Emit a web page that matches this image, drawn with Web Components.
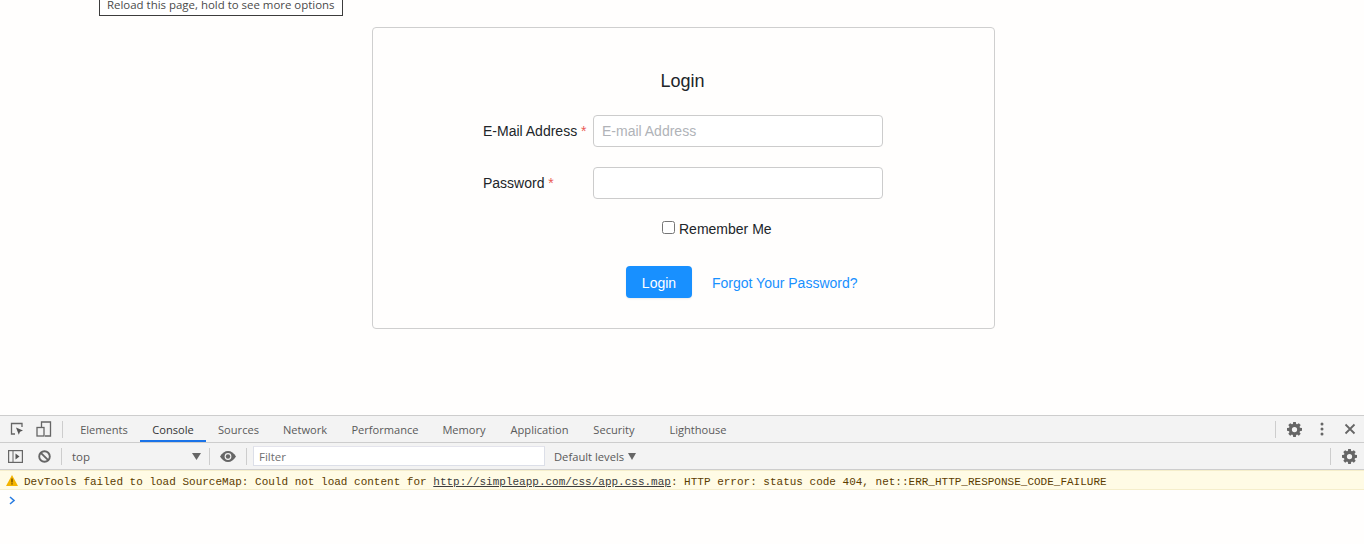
<!DOCTYPE html>
<html>
<head>
<meta charset="utf-8">
<title>Login</title>
<style>
	html, body { margin: 0; padding: 0; height: 544px; overflow: hidden; background: #fffefd; }
	body { display: flex; flex-direction: column; font-family: "Liberation Sans", Arial, sans-serif; }
</style>
</head>
<body>
<app-page>
	<reload-tip slot="tip">Reload this page, hold to see more options</reload-tip>
	<login-card></login-card>
</app-page>
<dev-tools></dev-tools>

<script>
const gearPath = 'M6.6 0h2.8l.4 2.1 1 .4 1.8-1.2 2 2-1.2 1.8.4 1 2.2.4v2.9l-2.2.4-.4 1 1.2 1.8-2 2-1.8-1.2-1 .4-.4 2.2H6.6l-.4-2.2-1-.4-1.8 1.2-2-2 1.2-1.8-.4-1L0 9.4V6.5l2.2-.4.4-1-1.2-1.8 2-2 1.8 1.2 1-.4zM8 5.2a2.8 2.8 0 1 0 0 5.6 2.8 2.8 0 0 0 0-5.6z';

class AppPage extends HTMLElement {
	connectedCallback() {
		let shadow = this.attachShadow({ mode: "open" });
		shadow.innerHTML = `
			<style>
				:host { display: block; position: relative; height: 415px; padding-top: 27px; box-sizing: border-box; }
			</style>
			<slot name="tip"></slot>
			<slot></slot>`;
	}
}

class ReloadTip extends HTMLElement {
	connectedCallback() {
		let shadow = this.attachShadow({ mode: "open" });
		shadow.innerHTML = `
			<style>
				:host {
					position: absolute; left: 99px; top: -8px; height: 22px; padding: 0 7px;
					display: flex; align-items: center; box-sizing: content-box;
					background: #fff; border: 1px solid #3c3c3c;
					font: 11.45px "Open Sans", "Liberation Sans", sans-serif; color: #4a4a4a; white-space: nowrap;
				}
			</style>
			<slot></slot>`;
	}
}

class LoginCard extends HTMLElement {
	connectedCallback() {
		let shadow = this.attachShadow({ mode: "open" });
		shadow.innerHTML = `
			<style>
				:host {
					display: block; box-sizing: border-box; width: 623px; height: 302px; margin-left: 372px;
					background: #fffefd; border: 1px solid #cfcfcf; border-radius: 4px;
					font: 14px "Liberation Sans", Arial, sans-serif; color: #212529;
				}
				h1 { margin: 0; padding: 43px 2px 0 0; height: 44px; line-height: 20px; box-sizing: content-box;
					font-size: 18px; font-weight: 400; text-align: center; }
				.row { display: flex; align-items: center; height: 32px; margin-left: 110px; }
				.row + .row { margin-top: 20px; }
				label.name { width: 110px; white-space: nowrap; }
				label.name b { font-weight: 400; color: #ea5a55; }
				input.text {
					box-sizing: border-box; width: 290px; height: 32px; padding: 0 8px; margin: 0;
					border: 1px solid #ccc; border-radius: 4px; background: #fff;
					font: 14px "Liberation Sans", Arial, sans-serif; color: #495057; outline: none;
				}
				input.text::placeholder { color: #b0b3b8; opacity: 1; }
				.remember { display: flex; align-items: center; height: 20px; margin: 20px 0 0 289px; }
				.remember input { width: 13px; height: 13px; margin: 0 4px 4px 0; }
				.actions { display: flex; align-items: center; height: 32px; margin: 27px 0 0 253px; }
				button {
					width: 66px; height: 32px; padding: 2px 0 0; border: 0; border-radius: 4px; background: #1890ff; color: #fff;
					font: 14px "Liberation Sans", Arial, sans-serif; box-shadow: 0 1px 2px rgba(0,0,0,.08);
				}
				a { margin-left: 20px; padding-top: 2px; color: #1890ff; text-decoration: none; }
			</style>
			<h1>Login</h1>
			<div class="row">
				<label class="name">E-Mail Address <b>*</b></label>
				<input class="text" type="email" placeholder="E-mail Address">
			</div>
			<div class="row">
				<label class="name">Password <b>*</b></label>
				<input class="text" type="password">
			</div>
			<div class="remember"><input type="checkbox"><span>Remember Me</span></div>
			<div class="actions"><button>Login</button><a href="#">Forgot Your Password?</a></div>`;
	}
}

class DevTools extends HTMLElement {
	connectedCallback() {
		let shadow = this.attachShadow({ mode: "open" });
		shadow.innerHTML = `
			<style>
				:host { display: block; height: 129px; font: 12px "Open Sans", "Liberation Sans", sans-serif; color: #5a5a5a; background: #fffefd; }
				.bar { display: flex; align-items: center; box-sizing: border-box; background: #f3f3f3; position: relative; }
				.tabs { height: 28px; border-top: 1px solid #cdcdcd; border-bottom: 1px solid #cdcdcd; }
				.tools { height: 27px; border-bottom: 1px solid #cdcdcd; }
				.sep { width: 1px; height: 17px; background: #cdcdcd; flex: none; }
				svg { display: block; flex: none; }
				.tab { height: 26px; display: flex; align-items: center; justify-content: center; box-sizing: border-box; flex: none; font-size: 11.1px; }
				.tab.on { color: #333; border-bottom: 2px solid #1a73e8; padding-top: 2px; }
				.spacer { flex: 1; }
				.filter { width: 292px; height: 20px; box-sizing: border-box; background: #fff; border: 1px solid #dcdfe8; border-top-color: #e4e4ec;
					padding-left: 5px; display: flex; align-items: center; font-size: 11.5px; color: #707070; }
				.msg { height: 20px; box-sizing: border-box; display: flex; align-items: center; background: #fffbe5; border-bottom: 1px solid #f5eecb; border-top: 1px solid #f5eecb;
					font: 11px "Liberation Mono", "DejaVu Sans Mono", monospace; color: #5c3c00; white-space: nowrap; }
				.msg span { padding-top: 3px; }
				.msg a { color: #3c3c3c; text-decoration: underline; }
				.prompt { height: 20px; padding-left: 9px; display: flex; align-items: center; }
			</style>
			<div class="bar tabs">
				<svg style="margin-left:10px" width="14" height="14" viewBox="0 0 14 14"><path d="M5 12H1.500V1.500H12V5" fill="none" stroke="#666" stroke-width="1.300"/><path d="M6 5.500l7 3-3 1.200-1.200 3z" fill="#555"/></svg>
				<svg style="margin-left:12px" width="16" height="16" viewBox="0 0 16 16"><path d="M5.500 6V1h9v14H9" fill="none" stroke="#666" stroke-width="1.300"/><rect x="1" y="6.500" width="7" height="8.500" fill="none" stroke="#666" stroke-width="1.300"/></svg>
				<span class="sep" style="margin-left:10px"></span>
				<span class="tab" style="width:72px;margin-left:5px">Elements</span>
				<span class="tab on" style="width:66px">Console</span>
				<span class="tab" style="width:65px">Sources</span>
				<span class="tab" style="width:68px">Network</span>
				<span class="tab" style="width:92px">Performance</span>
				<span class="tab" style="width:66px">Memory</span>
				<span class="tab" style="width:85px">Application</span>
				<span class="tab" style="width:64px">Security</span>
				<span class="tab" style="width:88px;margin-left:8px">Lighthouse</span>
				<span class="spacer"></span>
				<span class="sep" style="margin-right:11px"></span>
				<svg width="15" height="15" viewBox="0 0 16 16"><path d="${gearPath}" fill="#666" fill-rule="evenodd"/></svg>
				<svg style="margin-left:18px" width="4" height="14" viewBox="0 0 4 14"><circle cx="2" cy="2" r="1.500" fill="#666"/><circle cx="2" cy="7" r="1.500" fill="#666"/><circle cx="2" cy="12" r="1.500" fill="#666"/></svg>
				<svg style="margin-left:20px;margin-right:8px" width="12" height="12" viewBox="0 0 12 12"><path d="M1.500 1.500l9 9M10.500 1.500l-9 9" stroke="#666" stroke-width="1.800"/></svg>
			</div>
			<div class="bar tools">
				<svg style="margin-left:8px" width="15" height="13" viewBox="0 0 15 13"><rect x=".6" y=".6" width="13.800" height="11.800" fill="none" stroke="#666" stroke-width="1.200"/><path d="M5 1v11" stroke="#666"/><path d="M7.500 3.500l4 3-4 3z" fill="#555"/></svg>
				<svg style="margin-left:15px" width="13" height="13" viewBox="0 0 13 13"><circle cx="6.500" cy="6.500" r="5.300" fill="none" stroke="#666" stroke-width="1.900"/><path d="M2.800 2.800l7.400 7.400" stroke="#666" stroke-width="1.900"/></svg>
				<span class="sep" style="margin-left:10px"></span>
				<span style="margin-left:10px;width:120px;font-size:11.500px">top</span>
				<svg width="9" height="7" viewBox="0 0 9 7"><path d="M0 0h9L4.500 7z" fill="#666"/></svg>
				<span class="sep" style="margin-left:8px"></span>
				<svg style="margin-left:10px" width="16" height="11" viewBox="0 0 16 11"><path d="M0 5.500C2 2 5 0 8 0s6 2 8 5.500C14 9 11 11 8 11S2 9 0 5.500z" fill="#666"/><circle cx="8" cy="5.500" r="3.400" fill="#f3f3f3"/><circle cx="8" cy="5.500" r="2.200" fill="#666"/></svg>
				<span class="sep" style="margin-left:10px"></span>
				<span class="filter" style="margin-left:6px">Filter</span>
				<span style="margin-left:9px;font-size:11.200px">Default levels</span>
				<svg style="margin-left:4px" width="8" height="7" viewBox="0 0 8 7"><path d="M0 0h8L4 7z" fill="#666"/></svg>
				<span class="spacer"></span>
				<span class="sep" style="margin-right:11px"></span>
				<svg style="margin-right:7px" width="15" height="15" viewBox="0 0 16 16"><path d="${gearPath}" fill="#666" fill-rule="evenodd"/></svg>
			</div>
			<div class="msg">
				<svg style="margin:0 6px 0 6px" width="12" height="11" viewBox="0 0 12 11"><path d="M6 0l6 11H0z" fill="#f4b400"/><path d="M5.400 3.500h1.200v4H5.400zM5.400 8.300h1.200v1.200H5.400z" fill="#5c3c00"/></svg>
				<span>DevTools failed to load SourceMap: Could not load content for <a href="#">http://simpleapp.com/css/app.css.map</a>: HTTP error: status code 404, net::ERR_HTTP_RESPONSE_CODE_FAILURE</span>
			</div>
			<div class="prompt"><svg width="7" height="9" viewBox="0 0 7 9"><path d="M1 1l4 3.500L1 8" fill="none" stroke="#2a7de1" stroke-width="1.600"/></svg></div>`;
	}
}

customElements.define("app-page", AppPage);
customElements.define("reload-tip", ReloadTip);
customElements.define("login-card", LoginCard);
customElements.define("dev-tools", DevTools);
</script>
</body>
</html>
